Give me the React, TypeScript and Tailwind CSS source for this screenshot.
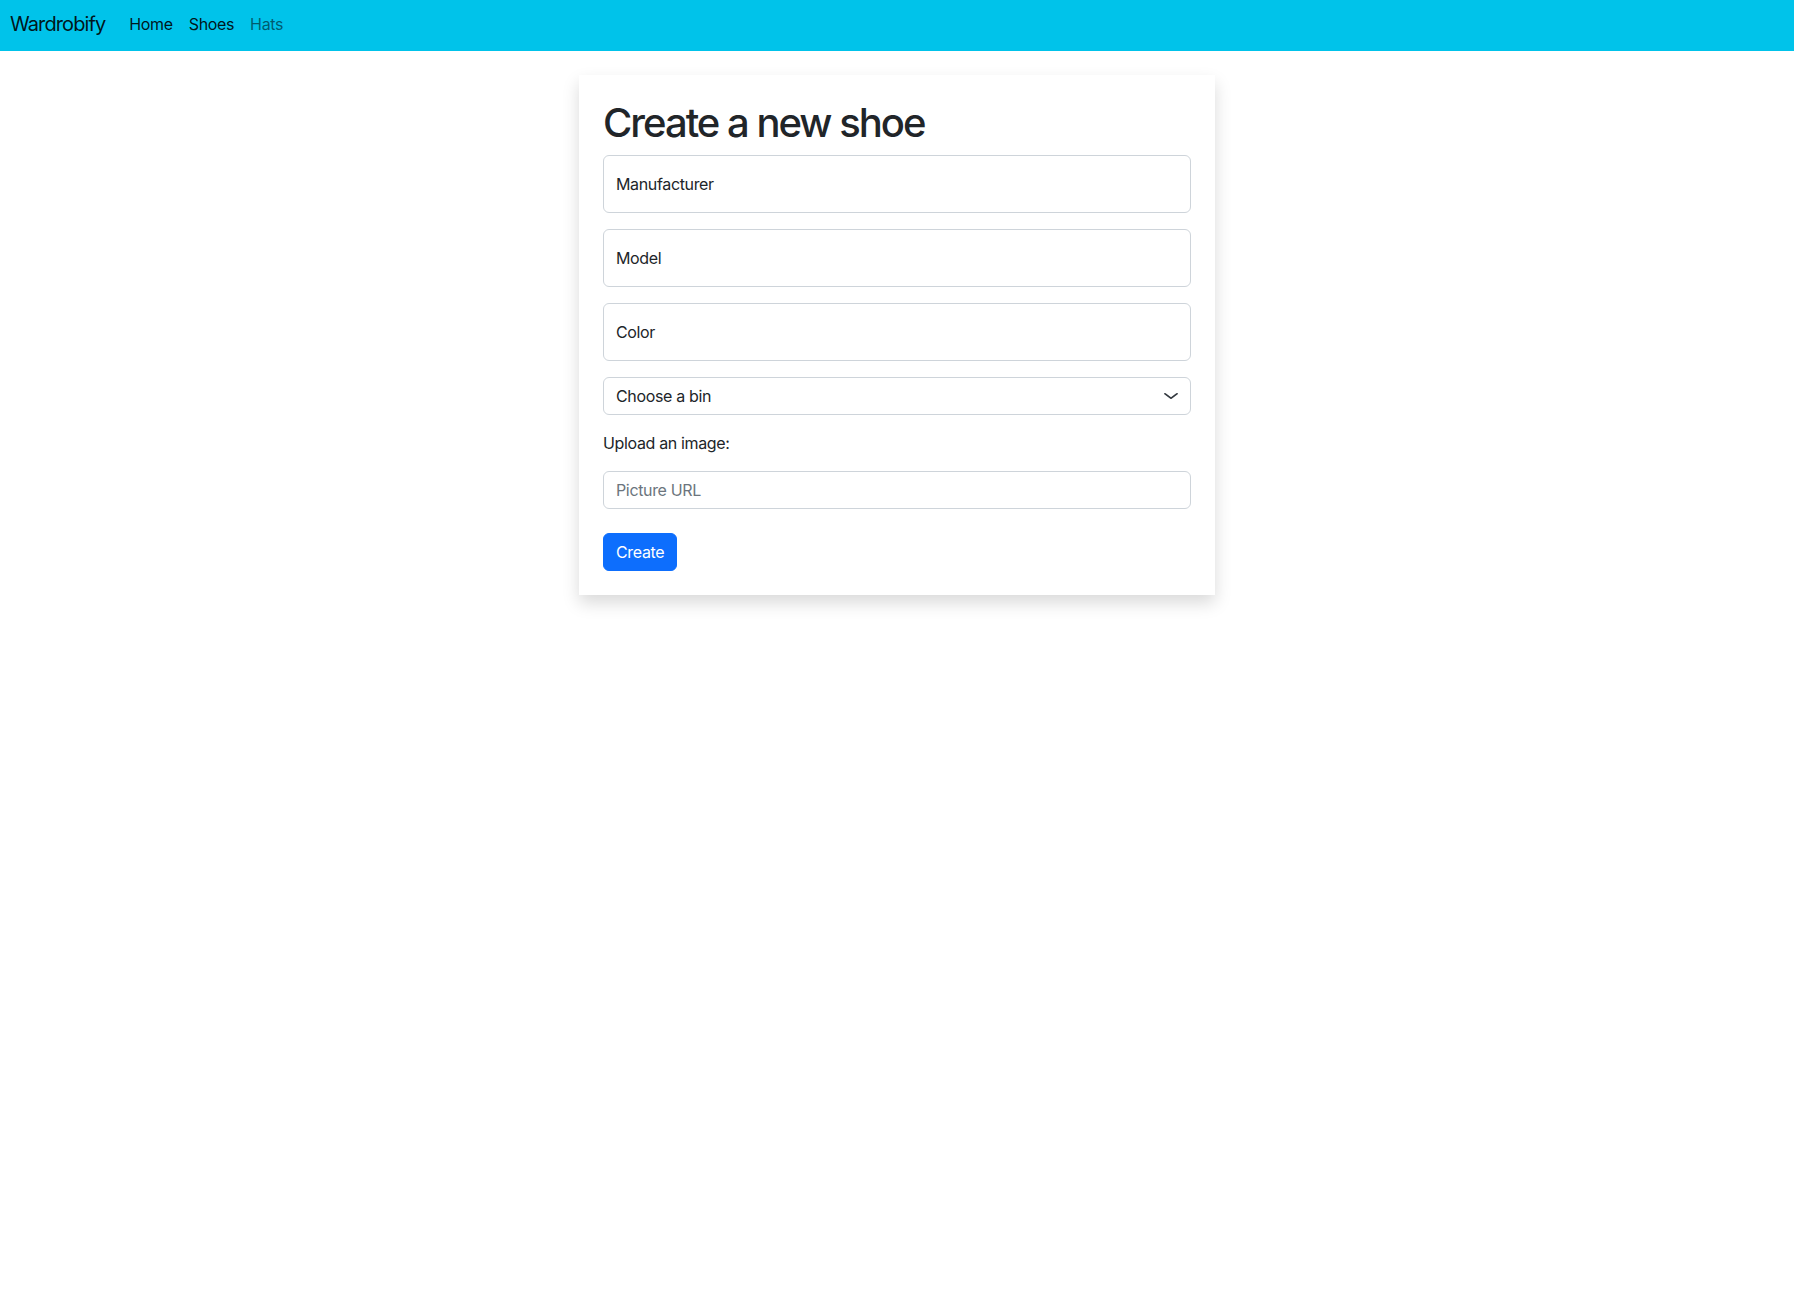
import { useState } from 'react';

const navLinks = [
    { href: '#', label: 'Home', active: true },
    { href: '#', label: 'Shoes', active: true },
    { href: '#', label: 'Hats', active: false },
];

const floatingFields = ['Manufacturer', 'Model', 'Color'];

export default function App() {
    const [bin, setBin] = useState('');

    return (
        <div className="min-h-screen bg-white font-['Inter','Liberation_Sans',sans-serif] text-base leading-6 tracking-[-0.35px] text-[#212529]">
            {/* top bar */}
            <nav className="flex h-[51px] items-center bg-[#00c3ea] pb-[4px] pl-[10px]">
                <a href="#" className="mr-4 text-[20px] leading-[30px] tracking-[-0.9px] text-black/90">
                    Wardrobify
                </a>
                <ul className="flex items-center">
                    {navLinks.map((link) => (
                        <li key={link.label}>
                            <a
                                href={link.href}
                                className={`block px-2 text-base leading-6 ${link.active ? 'text-black/90' : 'text-black/55'}`}
                            >
                                {link.label}
                            </a>
                        </li>
                    ))}
                </ul>
            </nav>

            {/* form card */}
            <div className="mx-auto mt-6 w-[636px] bg-white p-6 shadow-[0_8px_16px_rgba(0,0,0,0.15)]">
                <h1 className="mb-2 text-[40px] font-medium leading-[48px] tracking-[-2px]">Create a new shoe</h1>
                <form onSubmit={(e) => e.preventDefault()}>
                    {floatingFields.map((field) => (
                        <div key={field} className="mb-4">
                            <input
                                type="text"
                                placeholder={field}
                                className="block h-[58px] w-full rounded-md border border-[#ced4da] bg-white px-3 text-base tracking-[-0.35px] text-[#212529] outline-none placeholder:text-[#212529]"
                            />
                        </div>
                    ))}

                    <div className="relative mb-4">
                        <select
                            value={bin}
                            onChange={(e) => setBin(e.target.value)}
                            className="block h-[38px] w-full appearance-none rounded-md border border-[#ced4da] bg-white pl-3 pr-9 text-base tracking-[-0.35px] text-[#212529] outline-none"
                        >
                            <option value="">Choose a bin</option>
                        </select>
                        <svg
                            className="pointer-events-none absolute right-3 top-[13px] h-3 w-4"
                            viewBox="0 0 16 16"
                            preserveAspectRatio="none"
                            fill="none"
                            stroke="#343a40"
                            strokeWidth="2"
                            strokeLinecap="round"
                            strokeLinejoin="round"
                        >
                            <path d="m2 5 6 6 6-6" />
                        </svg>
                    </div>

                    <label className="mb-4 block">Upload an image:</label>
                    <input
                        type="text"
                        placeholder="Picture URL"
                        className="mb-6 block h-[38px] w-full rounded-md border border-[#ced4da] bg-white px-3 text-base tracking-[-0.35px] text-[#212529] outline-none placeholder:text-[#6c757d]"
                    />

                    <button
                        type="submit"
                        className="h-[38px] rounded-md border border-[#0d6efd] bg-[#0d6efd] px-3 text-base tracking-[-0.35px] text-white"
                    >
                        Create
                    </button>
                </form>
            </div>
        </div>
    );
}
